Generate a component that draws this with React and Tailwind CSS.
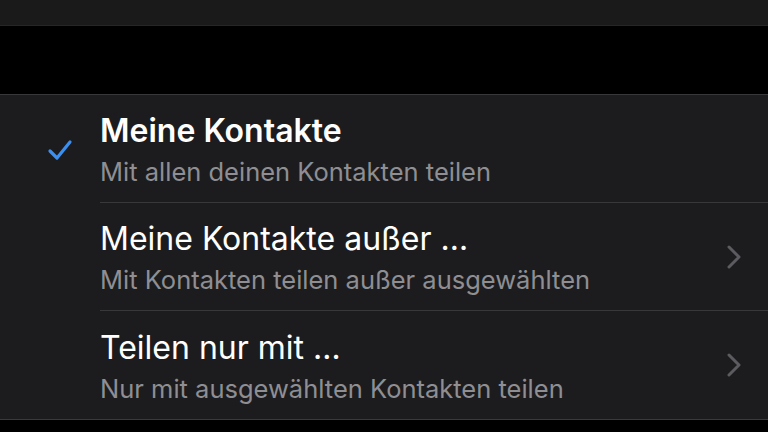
export default function App() {
  const rows = [
    { title: "Meine Kontakte", sub: "Mit allen deinen Kontakten teilen", checked: true },
    { title: "Meine Kontakte außer …", sub: "Mit Kontakten teilen außer ausgewählten", chevron: true },
    { title: "Teilen nur mit …", sub: "Nur mit ausgewählten Kontakten teilen", chevron: true },
  ];
  return (
    <div className="w-[768px] h-[432px] bg-black overflow-hidden flex flex-col" style={{ fontFamily: "Inter, 'Noto Sans', sans-serif" }}>
      <div className="h-[26px] bg-[#1a1a1a] border-b border-[#262626]" />
      <div className="h-[68px] bg-black" />
      <div className="bg-[#1c1c1e] border-t border-[#38383a] border-b border-b-[#3a3a3c]">
        {rows.map((r, i) => (
          <div key={i} className="flex h-[108px]">
            <div className="w-[100px] flex items-center justify-center pl-[20px] pt-[2px]">
              {r.checked && (
                <svg width="26" height="22" viewBox="0 0 26 22" fill="none">
                  <path d="M3 12 L10 19 L23 3" stroke="#3a8ff0" strokeWidth="3.2" strokeLinecap="round" strokeLinejoin="round" />
                </svg>
              )}
            </div>
            <div className={"flex-1 flex items-center pr-[26px] " + (i < rows.length - 1 ? "border-b border-[#38383a]" : "")}>
              <div className="flex-1 flex flex-col pt-[2px]">
                <div className={"text-[32px] leading-[38px] text-white " + (r.checked ? "font-semibold" : "font-normal")}>{r.title}</div>
                <div className="text-[25.5px] leading-[30px] text-[#8e8e93] mt-[7px]">{r.sub}</div>
              </div>
              {r.chevron && (
                <svg width="16" height="24" viewBox="0 0 16 24" fill="none">
                  <path d="M3 2 L13 12 L3 22" stroke="#5b5b60" strokeWidth="3" strokeLinecap="round" strokeLinejoin="round" />
                </svg>
              )}
            </div>
          </div>
        ))}
      </div>
      <div className="flex-1 bg-black" />
    </div>
  );
}
